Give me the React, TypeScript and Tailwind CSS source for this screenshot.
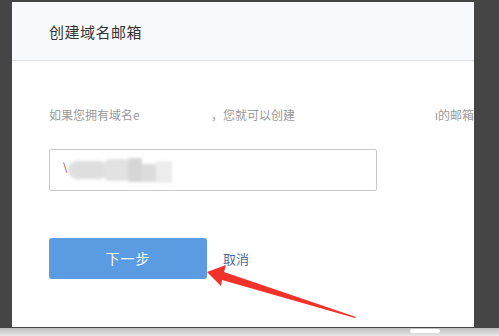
export default function App() {
  return (
    <div className="relative w-[499px] h-[336px] overflow-hidden bg-[#454545] flex flex-col font-['Noto_Sans_CJK_SC',sans-serif]">
      <div className="flex h-[328px]">
        <div className="w-[12px] shrink-0" />
        <div className="mt-[2px] w-[462px] h-[325px] bg-white flex flex-col overflow-hidden">
          {/* header */}
          <div className="h-[59px] shrink-0 bg-[#f8f9fc] border-b border-[#dcdfe4] flex items-center pl-[37px] pt-[2px]">
            <span className="text-[15px] text-[#333] tracking-[0.5px]">创建域名邮箱</span>
          </div>

          {/* body */}
          <div className="pl-[37px] pt-[46px] flex flex-col">
            <p className="text-[12px] leading-[16px] text-[#9a9a9a] whitespace-nowrap flex">
              <span>如果您拥有域名e</span>
              <span className="w-[72px]" />
              <span>，您就可以创建</span>
              <span className="w-[141px]" />
              <span>ı的邮箱</span>
            </p>

            <div className="mt-[26px] w-[328px] h-[42px] border border-[#c9c9c9] rounded-[2px] relative flex items-center pl-[13px]">
              <span className="text-[11px] text-[#7a4a3a] leading-none -mt-[8px]">\</span>
              <div className="flex items-center ml-[1px] blur-[1.5px]">
                <div className="w-[40px] h-[18px] bg-[#dedede] rounded-full" />
                <div className="w-[26px] h-[22px] bg-[#e2e2e2] -ml-[4px] rounded-[6px]" />
                <div className="w-[14px] h-[24px] bg-[#d6d6d6] -ml-[2px]" />
                <div className="w-[14px] h-[18px] bg-[#dcdcdc] mt-[6px]" />
                <div className="w-[16px] h-[22px] bg-[#ededed] mt-[4px]" />
              </div>
            </div>

            <div className="mt-[47px] flex items-center">
              <button className="w-[158px] h-[41px] rounded-[3px] bg-[#5b9be1] text-white text-[14px] tracking-[1px]">
                下一步
              </button>
              <span className="ml-[16px] text-[13px] text-[#4d6c9a]">取消</span>
            </div>
          </div>
        </div>
        <div className="flex-1" />
      </div>
      <div className="flex-1 bg-gradient-to-b from-[#bdbdbd] to-[#e8e8e8]" />

      {/* red annotation arrow */}
      <svg className="absolute inset-0 pointer-events-none" width="499" height="336" viewBox="0 0 499 336">
        <polygon points="207,272 226,265 224,272 356,317 355,318 222,280 221,286" fill="#f0322a" />
      </svg>
      <div className="absolute left-[410px] top-[329px] w-[30px] h-[4px] bg-white rounded-sm" />
    </div>
  );
}
